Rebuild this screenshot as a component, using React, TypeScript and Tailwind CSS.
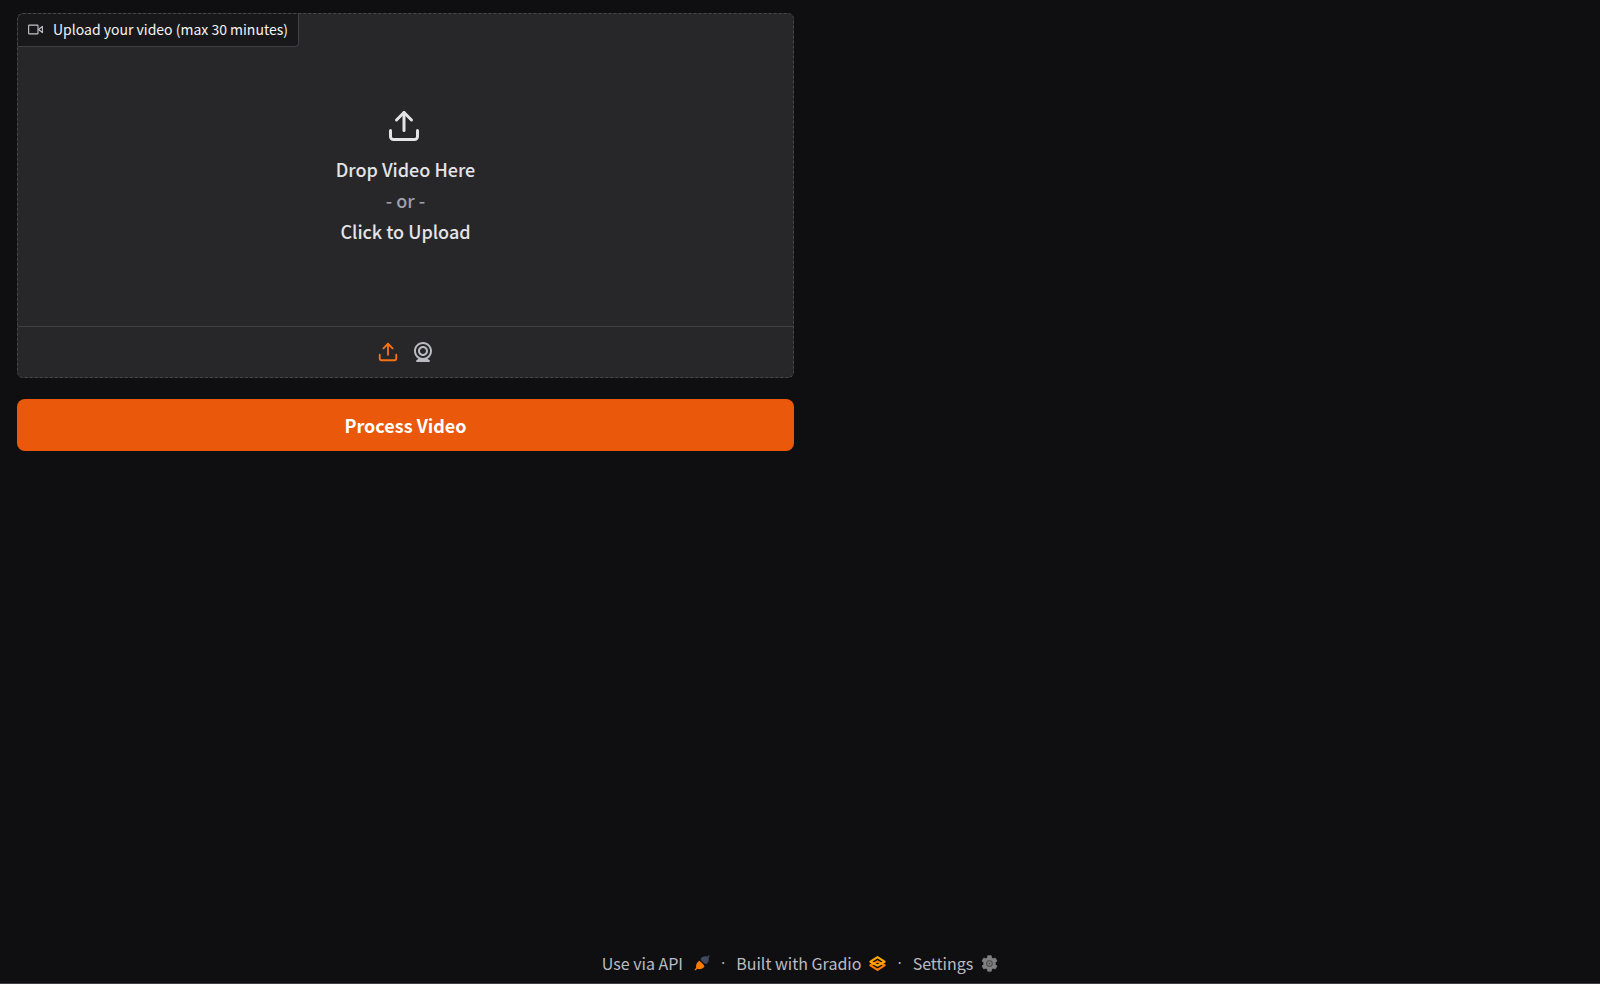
import { useRef } from "react";

function UploadIcon({ className }: { className?: string }) {
  return (
    <svg
      className={className}
      viewBox="0 0 24 24"
      fill="none"
      stroke="currentColor"
      strokeWidth="2"
      strokeLinecap="round"
      strokeLinejoin="round"
      aria-hidden="true"
    >
      <path d="M21 15v4a2 2 0 0 1-2 2H5a2 2 0 0 1-2-2v-4" />
      <polyline points="17 8 12 3 7 8" />
      <line x1="12" y1="3" x2="12" y2="15" />
    </svg>
  );
}

function WebcamIcon({ className }: { className?: string }) {
  return (
    <svg className={className} viewBox="0 0 24 24" fill="currentColor" aria-hidden="true">
      <path d="M12 2c-4.963 0-9 4.038-9 9c0 3.328 1.82 6.232 4.513 7.79l-2.067 1.378A1 1 0 0 0 6 22h12a1 1 0 0 0 .555-1.832l-2.067-1.378C19.18 17.232 21 14.328 21 11c0-4.962-4.037-9-9-9zm0 16c-3.859 0-7-3.141-7-7c0-3.86 3.141-7 7-7s7 3.14 7 7c0 3.859-3.141 7-7 7z" />
      <path d="M12 6c-2.757 0-5 2.243-5 5s2.243 5 5 5s5-2.243 5-5s-2.243-5-5-5zm0 8c-1.654 0-3-1.346-3-3s1.346-3 3-3s3 1.346 3 3s-1.346 3-3 3z" />
    </svg>
  );
}

function VideoIcon({ className }: { className?: string }) {
  return (
    <svg
      className={className}
      viewBox="0 0 24 24"
      fill="none"
      stroke="currentColor"
      strokeWidth="1.8"
      strokeLinecap="round"
      strokeLinejoin="round"
      aria-hidden="true"
    >
      <polygon points="23 7 17 12 23 17 23 7" />
      <rect x="1" y="5" width="15" height="14" rx="1" />
    </svg>
  );
}

function PlugIcon({ className }: { className?: string }) {
  return (
    <svg className={className} viewBox="0 0 24 24" strokeWidth="2" strokeLinecap="round" aria-hidden="true">
      <g fill="#ff7c00" stroke="#ff7c00">
        <path d="M2 22l3.5-3.5" />
        <path d="M4.500 19.500c-1-4 0-7 3.500-9.500l2.500 2 3 3 1 2.500c-2.500 3-6 3.500-10 2z" />
      </g>
      <g fill="#3f4a5f" stroke="#3f4a5f">
        <path d="M22.500 1.500L20 4" />
        <path d="M20.500 3.500c-4-1.500-7-.5-9.500 2l1 2.500 4 4 2.500.5c2.500-2.500 3.500-5.500 2-9z" />
      </g>
    </svg>
  );
}

function GradioLogo({ className }: { className?: string }) {
  return (
    <svg
      className={className}
      viewBox="0 0 24 22"
      fill="none"
      strokeWidth="3"
      strokeLinejoin="round"
      aria-hidden="true"
    >
      <path d="M2 13.500L12 8l10 5.500L12 20z" stroke="#ff7c00" />
      <path d="M2 8.500L12 2l10 6.500L12 14z" stroke="#ffa800" />
    </svg>
  );
}

function GearIcon({ className }: { className?: string }) {
  return (
    <svg className={className} viewBox="0 0 24 24" aria-hidden="true">
      <path
        d="M9.5 1h5l.6 3.200 1.900 1.100 3.100-1.100 2.500 4.300-2.500 2.100v2.800l2.500 2.100-2.500 4.300-3.100-1.100-1.900 1.100-.6 3.200h-5l-.6-3.200L7 18.700l-3.100 1.100-2.500-4.300 2.500-2.100v-2.800L1.400 8.500l2.500-4.300L7 5.300l1.900-1.100z"
        fill="#808080"
        stroke="#808080"
        strokeLinejoin="round"
      />
      <circle cx="12" cy="12" r="4" fill="#808080" stroke="#4a4a4c" strokeWidth="1.5" />
      <circle cx="12" cy="12" r="1.2" fill="#4a4a4c" />
    </svg>
  );
}

export default function App() {
  const fileInput = useRef<HTMLInputElement>(null);
  const openPicker = () => fileInput.current?.click();

  return (
    <div className="flex min-h-screen flex-col border-b border-[#3f3f46] bg-[#0f0f11] font-['Noto_Sans_CJK_SC',sans-serif]">
      <main className="grid flex-1 grid-cols-2 content-start gap-3 px-[17px] pt-[13px]">
        <div className="flex flex-col gap-[21px]">
          <section className="rounded-md border border-dashed border-[#46464d] bg-[#27272a]">
            <label
              htmlFor="video-file"
              className="flex h-[33px] w-fit items-center gap-[10px] rounded-tl-md rounded-br-sm border-r border-b border-[#3f3f46] bg-[#18181b] px-[10px] pb-[2px] text-sm text-[#f4f4f5]"
            >
              <VideoIcon className="size-[15px] text-[#c4c4ca]" />
              Upload your video (max 30 minutes)
            </label>
            <input ref={fileInput} id="video-file" type="file" accept="video/*" className="hidden" />
            <button
              type="button"
              onClick={openPicker}
              className="flex h-[279px] w-full flex-col items-center pt-[61px] text-lg leading-[31px] font-medium text-[#e4e4e7]"
            >
              <UploadIcon className="mr-1 mb-[10px] size-9" />
              <span>Drop Video Here</span>
              <span className="text-[#a1a1aa]">- or -</span>
              <span>Click to Upload</span>
            </button>
            <div className="flex h-[51px] items-center justify-center gap-3 border-t border-[#3f3f46]">
              <button type="button" aria-label="Upload file" onClick={openPicker} className="text-[#f97316]">
                <UploadIcon className="size-[22px]" />
              </button>
              <button type="button" aria-label="Record from webcam" className="text-[#bbbbc2]">
                <WebcamIcon className="size-6" />
              </button>
            </div>
          </section>
          <button
            type="button"
            className="h-[52px] rounded-lg bg-[#ea580c] text-lg font-bold text-white"
          >
            Process Video
          </button>
        </div>
      </main>

      <footer className="flex h-10 items-center justify-center gap-[11px] text-base text-[#bbbbc2]">
        <a href="#api" className="flex items-center gap-[11px]">
          Use via API
          <PlugIcon className="size-4" />
        </a>
        <span className="font-['Open_Sans',sans-serif]">·</span>
        <a href="#gradio" className="flex items-center gap-2">
          Built with Gradio
          <GradioLogo className="size-[17px]" />
        </a>
        <span className="font-['Open_Sans',sans-serif]">·</span>
        <a href="#settings" className="flex items-center gap-2">
          Settings
          <GearIcon className="size-[17px]" />
        </a>
      </footer>
    </div>
  );
}
